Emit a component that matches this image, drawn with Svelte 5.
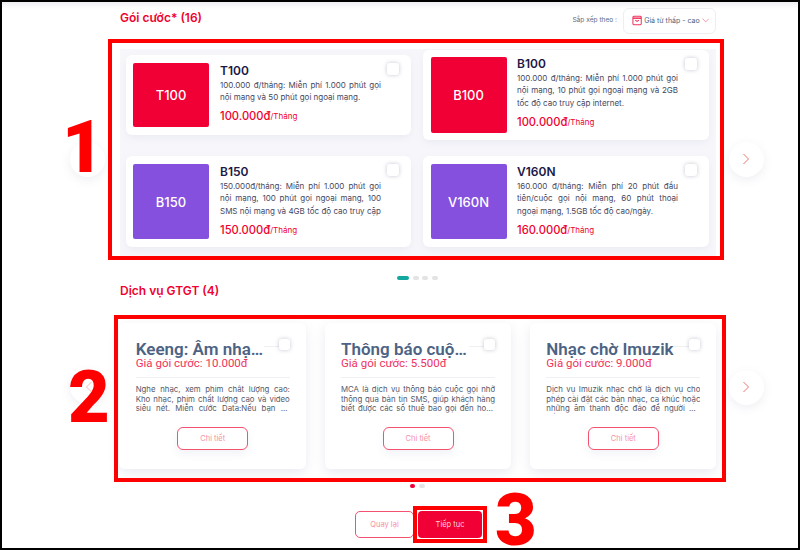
<script>
  const plans = [
    { code: 'T100', tone: 'red', desc: '100.000 đ/tháng: Miễn phí 1.000 phút gọi nội mạng và 50 phút gọi ngoại mạng.', price: '100.000đ' },
    { code: 'B100', tone: 'red', desc: '100.000 đ/tháng: Miễn phí 1.000 phút gọi nội mạng, 10 phút gọi ngoại mạng và 2GB tốc độ cao truy cập internet.', price: '100.000đ' },
    { code: 'B150', tone: 'purple', desc: '150.000đ/tháng: Miễn phí 1.000 phút gọi nội mạng, 100 phút gọi ngoại mạng, 100 SMS nội mạng và 4GB tốc độ cao truy cập internet.', price: '150.000đ' },
    { code: 'V160N', tone: 'purple', desc: '160.000 đ/tháng: Miễn phí 20 phút đầu tiên/cuộc gọi nội mạng, 60 phút thoại ngoại mạng, 1.5GB tốc độ cao/ngày.', price: '160.000đ' }
  ];

  const services = [
    { name: 'Keeng: Âm nhạc và phim', price: '10.000đ', desc: 'Nghe nhạc, xem phim chất lượng cao: Kho nhạc, phim chất lượng cao và video siêu nét. Miễn cước Data:Nếu bạn đã đăng ký gói cước data của Viettel' },
    { name: 'Thông báo cuộc gọi nhỡ', price: '5.500đ', desc: 'MCA là dịch vụ thông báo cuộc gọi nhỡ thông qua bản tin SMS, giúp khách hàng biết được các số thuê bao gọi đến hoặc khi máy bận' },
    { name: 'Nhạc chờ Imuzik', price: '9.000đ', desc: 'Dịch vụ Imuzik nhạc chờ là dịch vụ cho phép cài đặt các bản nhạc, ca khúc hoặc những âm thanh độc đáo để người gọi đến nghe thay' }
  ];
</script>

<div class="page">
  <div class="head">
    <h2>Gói cước* (16)</h2>
    <div class="sort">
      <span class="sort-label">Sắp xếp theo :</span>
      <div class="sort-box">
        <svg width="11" height="11" viewBox="0 0 11 11" fill="none" stroke="#f0325c" stroke-width="1.1">
          <rect x="1" y="1" width="9" height="9" rx="1" />
          <path d="M1 3h9" stroke-width="1.6" />
          <path d="M3.5 5l2 1.5 2-1.5" />
        </svg>
        <span>Giá từ thấp - cao</span>
        <svg width="8" height="5" viewBox="0 0 8 5" fill="none" stroke="#f0607f" stroke-width="0.7">
          <path d="M0.5 0.5l3.5 3.5 3.5-3.5" />
        </svg>
      </div>
    </div>
  </div>

  <div class="plan-row">
    <div class="plan-frame">
      <div class="plan-grid">
        {#each plans as plan}
          <div class="plan">
            <div class="thumb {plan.tone}">{plan.code}</div>
            <div class="plan-info">
              <div class="plan-code">{plan.code}</div>
              <p class="plan-desc">{plan.desc}</p>
              <div class="plan-price">{plan.price}<span>/Tháng</span></div>
            </div>
            <span class="check"></span>
          </div>
        {/each}
      </div>
    </div>
    <button class="next" aria-label="Sau">
      <svg width="8" height="12" viewBox="0 0 8 12" fill="none" stroke="#e8756f" stroke-width="1"><path d="M1.5 1l5 5-5 5" /></svg>
    </button>
    <span class="prev"></span>
  </div>

  <div class="dots teal">
    <i class="on"></i><i></i><i></i><i></i>
  </div>

  <h2 class="svc-title">Dịch vụ GTGT (4)</h2>

  <div class="svc-row">
    <div class="svc-frame">
      {#each services as svc}
        <div class="svc">
          <div class="svc-top">
            <div class="svc-name">{svc.name}</div>
            <span class="check small"></span>
          </div>
          <div class="svc-price">Giá gói cước: {svc.price}</div>
          <hr />
          <p class="svc-desc">{svc.desc}</p>
          <button class="detail">Chi tiết</button>
        </div>
      {/each}
    </div>
    <button class="next" aria-label="Sau">
      <svg width="8" height="12" viewBox="0 0 8 12" fill="none" stroke="#e8756f" stroke-width="1"><path d="M1.5 1l5 5-5 5" /></svg>
    </button>
    <span class="prev"></span>
  </div>

  <div class="dots red">
    <i class="on"></i><i></i>
  </div>

  <div class="actions">
    <button class="back">Quay lại</button>
    <div class="next-wrap"><button class="go">Tiếp tục</button></div>
    <span class="num three">3</span>
  </div>

  <span class="num one">1</span>
  <span class="num two">2</span>
  <svg class="prev-mark" width="8" height="12" viewBox="0 0 8 12" fill="none" stroke="#f7b9b5" stroke-width="1"><path d="M6.5 1l-5 5 5 5" /></svg>
</div>

<style>
  :global(body) {
    background: #fff;
  }

  .page {
    position: relative;
    box-sizing: border-box;
    width: 800px;
    height: 550px;
    overflow: hidden;
    padding: 8px 0 0 118px;
    border: 2px solid #000;
    background: linear-gradient(#eeeef2, #fff 7px);
    font-family: Inter, "Noto Sans", sans-serif;
  }

  h2 {
    margin: 0;
    color: #f0002e;
    font-size: 12px;
    font-weight: 600;
    line-height: 16px;
  }

  .head {
    display: flex;
    justify-content: space-between;
    align-items: flex-start;
    width: 596px;
    height: 29px;
  }

  .sort {
    display: flex;
    align-items: center;
    gap: 6px;
    margin-top: -2.5px;
  }

  .sort-label {
    margin-bottom: 2px;
    color: #5b6b84;
    font-size: 6.6px;
  }

  .sort-box {
    display: flex;
    align-items: center;
    gap: 2px;
    box-sizing: border-box;
    width: 93px;
    height: 26px;
    padding: 0 6px 0 8px;
    border: 1px solid #eceef3;
    border-radius: 6px;
    color: #4d5f7c;
    font-size: 7px;
    white-space: nowrap;
  }

  .plan-row,
  .svc-row {
    display: flex;
    align-items: flex-start;
  }

  .plan-frame {
    box-sizing: border-box;
    flex: none;
    width: 616px;
    height: 221px;
    margin-left: -12px;
    border: 4px solid #f00;
    background: #fff;
  }

  .plan-grid {
    display: grid;
    grid-template-columns: 285px 286px;
    grid-template-rows: 90px 91px;
    column-gap: 12px;
    row-gap: 16px;
    box-sizing: border-box;
    height: 207px;
    margin: 6px 4px 0 8px;
    padding: 1px 0 0 6px;
    background: #f7f7fb;
  }

  .plan {
    position: relative;
    display: flex;
    gap: 10.5px;
    box-sizing: border-box;
    padding: 7px 8px 7px 7.5px;
    border-radius: 6px;
    background: #fff;
    box-shadow: 0 3px 8px rgba(90, 100, 150, 0.08);
  }

  .plan:nth-child(odd) {
    gap: 11px;
    padding-left: 7px;
  }

  .plan:first-child {
    align-self: center;
    padding-block: 8px;
  }

  .plan:nth-child(n + 3) {
    padding-block: 8px;
  }

  .thumb {
    display: flex;
    flex: none;
    align-items: center;
    justify-content: center;
    width: 76px;
    border-radius: 2px;
    color: #fff;
    font-size: 13px;
    font-weight: 500;
  }

  .thumb.red {
    background: #f00034;
  }

  .thumb.purple {
    background: #8550de;
  }

  .plan-info {
    width: 161px;
    min-width: 0;
    padding-top: 1px;
  }

  .plan:nth-child(2) .plan-info {
    padding-top: 0;
  }

  .plan-code {
    color: #1b1846;
    font-size: 12px;
    font-weight: 600;
    line-height: 14px;
  }

  .plan-desc {
    max-height: 37.5px;
    margin: 0.5px 0 0;
    overflow: hidden;
    color: #45485f;
    font-size: 8px;
    line-height: 12.5px;
    text-align: justify;
  }

  .plan-price {
    margin-top: 5.5px;
    padding-bottom: 4px;
    color: #f0002e;
    font-size: 11.2px;
    font-weight: 500;
    line-height: 14px;
  }

  .plan-price span {
    font-size: 8px;
    font-weight: 400;
    vertical-align: 1px;
  }

  .check {
    position: absolute;
    top: 8px;
    right: 12px;
    box-sizing: border-box;
    width: 12px;
    height: 12px;
    border-radius: 3px;
    background: #fff;
    box-shadow: 0 0 4px rgba(60, 70, 110, 0.3);
  }

  .next {
    display: flex;
    align-items: center;
    justify-content: center;
    flex: none;
    width: 35px;
    height: 35px;
    padding: 0;
    border: 0;
    border-radius: 50%;
    background: #fff;
    box-shadow: 0 3px 10px rgba(90, 100, 150, 0.1);
  }

  .plan-row .next {
    margin: 102.5px 0 0 4.5px;
  }

  .svc-row .next {
    margin: 54.5px 0 0 2.5px;
  }

  .prev {
    position: absolute;
    left: 68px;
    width: 35px;
    height: 35px;
    border-radius: 50%;
    background: #fff;
    box-shadow: 0 3px 10px rgba(90, 100, 150, 0.1);
  }

  .plan-row .prev {
    top: 140px;
  }

  .svc-row .prev {
    top: 367px;
  }

  .dots {
    display: flex;
    justify-content: center;
    width: 596px;
    height: 4px;
    margin-left: -0.5px;
  }

  .dots i {
    display: block;
    width: 6px;
    height: 4px;
    border-radius: 2px;
    background: #e3e3e6;
  }

  .dots.teal {
    gap: 3.5px;
    margin-top: 16px;
  }

  .dots.teal i.on {
    width: 12px;
    background: #12a8a0;
  }

  .svc-title {
    margin-top: 3px;
  }

  .svc-row {
    margin: 16px 0 0 -6px;
  }

  .svc-frame {
    display: flex;
    gap: 18.8px;
    box-sizing: border-box;
    flex: none;
    width: 612px;
    height: 167px;
    padding: 4px 0 0 1.3px;
    border: 4px solid #f00;
  }

  .svc {
    box-sizing: border-box;
    flex: none;
    width: 186.5px;
    height: 146px;
    padding: 17.5px 16px 0 16.4px;
    border-radius: 6px;
    background: #fff;
    box-shadow: 0 4px 12px rgba(90, 100, 150, 0.13);
  }

  .svc-top {
    position: relative;
    height: 17px;
  }

  .svc-top::before {
    content: "";
    position: absolute;
    left: 0;
    right: 0;
    top: 6.5px;
    height: 1px;
    background: #eff0f4;
  }

  .svc-name {
    position: relative;
    width: 128px;
    margin-top: -1px;
    overflow: hidden;
    background: #fff;
    color: #4d6384;
    font-family: Roboto, sans-serif;
    font-size: 17px;
    font-weight: 600;
    line-height: 18px;
    text-overflow: ellipsis;
    white-space: nowrap;
  }

  .check.small {
    top: -0.5px;
    right: 0;
    width: 11px;
    height: 11px;
  }

  .svc-price {
    color: #f0325c;
    font-family: Roboto, sans-serif;
    font-size: 11.5px;
    line-height: 13px;
  }

  hr {
    height: 1px;
    margin: 7px 0 7.3px;
    border: 0;
    background: #eff0f4;
  }

  .svc-desc {
    display: -webkit-box;
    margin: 0;
    overflow: hidden;
    color: #55586a;
    font-size: 7.8px;
    line-height: 9.7px;
    text-align: justify;
    -webkit-box-orient: vertical;
    -webkit-line-clamp: 3;
  }

  .detail,
  .back {
    display: block;
    box-sizing: border-box;
    border: 1px solid #f4506f;
    background: #fff;
    color: #f890a5;
    font-family: inherit;
    font-size: 7.5px;
  }

  .detail {
    width: 71px;
    height: 23px;
    margin: 13.3px auto 0;
    border-radius: 6px;
    box-shadow: 0 4px 8px rgba(90, 100, 150, 0.08);
  }

  .dots.red {
    gap: 4px;
    margin-top: 2px;
  }

  .dots.red i.on {
    width: 5px;
    background: #f00034;
  }

  .actions {
    position: relative;
    display: flex;
    align-items: center;
    margin: 18px 0 0 235px;
  }

  .back {
    width: 59px;
    height: 27px;
    border-radius: 5px;
  }

  .next-wrap {
    position: relative;
    box-sizing: border-box;
    width: 74px;
    height: 37px;
    margin-left: -1px;
    padding: 1px;
    border: 4px solid #f00;
  }

  .go {
    display: block;
    width: 100%;
    height: 100%;
    border: 0;
    border-radius: 4px;
    background: #f00034;
    color: #ffd3dc;
    font-family: inherit;
    font-size: 7.5px;
  }

  .num {
    position: absolute;
    z-index: 1;
    color: #f00;
    font-family: Roboto, sans-serif;
    font-size: 72px;
    font-weight: 900;
    line-height: 1;
  }

  .one {
    left: 60px;
    top: 110px;
  }

  .two {
    left: 66px;
    top: 360px;
  }

  .three {
    left: 140px;
    top: -21px;
  }

  .prev-mark {
    position: absolute;
    z-index: 2;
    left: 83px;
    top: 379px;
  }
</style>
